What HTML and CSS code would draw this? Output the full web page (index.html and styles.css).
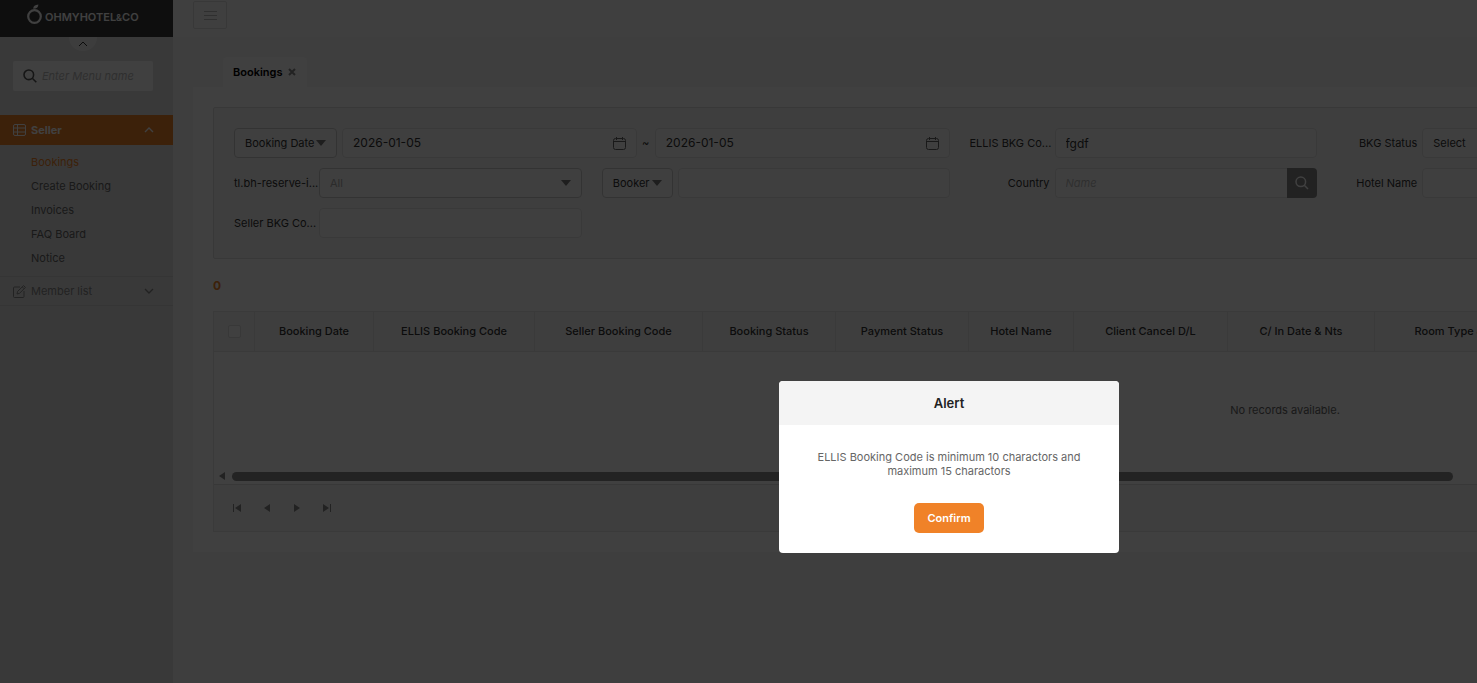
FILE: index.html
```html
<!DOCTYPE html>
<html lang="en">
<head>
<meta charset="utf-8">
<title>Bookings</title>
<link rel="stylesheet" href="styles.css">
</head>
<body>
<div class="app">
  <aside class="sidebar">
    <a class="logo" href="#">
      <svg width="17" height="24" viewBox="0 0 17 24" fill="none" stroke="currentColor"><circle cx="8.500" cy="12.500" r="6.300" stroke-width="2.200"/><path d="M7.200 4.800C7.200 2 9 .6 12.400.4 12.400 3 10.600 4.800 7.200 4.800Z" fill="currentColor" stroke="none"/></svg>
      <span>OHMYHOTEL<small>&amp;</small>CO</span>
    </a>
    <button class="fold" aria-label="Collapse header"><svg width="10" height="6" viewBox="0 0 10 6"><path d="M1 5l4-4 4 4"/></svg></button>
    <label class="menu-search">
      <svg width="14" height="14" viewBox="0 0 14 14"><circle cx="5.800" cy="5.800" r="4.800"/><path d="M9.300 9.300L13.300 13.300"/></svg>
      <input type="text" placeholder="Enter Menu name" aria-label="Menu name">
    </label>
    <nav class="menu">
      <button class="group active">
        <svg width="13" height="12" viewBox="0 0 13 12"><rect x=".5" y=".5" width="12" height="11" rx="1.500"/><path d="M4.500 .5v11M.5 4h12M.5 8h12"/></svg>
        <span>Seller</span>
        <svg class="chev" width="10" height="6" viewBox="0 0 10 6"><path d="M1 5l4-4 4 4"/></svg>
      </button>
      <ul>
        <li><a class="current" href="#">Bookings</a></li>
        <li><a href="#">Create Booking</a></li>
        <li><a href="#">Invoices</a></li>
        <li><a href="#">FAQ Board</a></li>
        <li><a href="#">Notice</a></li>
      </ul>
      <button class="group plain">
        <svg width="13" height="13" viewBox="0 0 13 13"><path d="M7 2H1.500a1 1 0 0 0-1 1v8.500a1 1 0 0 0 1 1H10a1 1 0 0 0 1-1V6M4 9l.6-2.600L10.600.6l1.800 1.800-5.900 6zM9.300 1.900l1.800 1.800"/></svg>
        <span>Member list</span>
        <svg class="chev" width="10" height="6" viewBox="0 0 10 6"><path d="M1 1l4 4 4-4"/></svg>
      </button>
    </nav>
  </aside>

  <main class="main">
    <header class="topbar">
      <button class="burger" aria-label="Menu"><svg width="13" height="9" viewBox="0 0 13 9"><path d="M0 .5h13M0 4.500h13M0 8.500h13"/></svg></button>
    </header>
    <div class="tabs">
      <div class="tab"><span>Bookings</span><button aria-label="Close tab"><svg width="8" height="8" viewBox="0 0 8 8"><path d="M1 1l6 6M7 1l-6 6"/></svg></button></div>
    </div>
    <section class="panel">
      <form class="filters">
        <div class="field wide">
          <div class="select kind"><select aria-label="Date type"><option>Booking Date</option></select><svg width="10" height="6" viewBox="0 0 10 6"><path d="M0 0h10L5 6z"/></svg></div>
          <div class="range">
            <label class="date"><input type="text" value="2026-01-05" aria-label="From"><svg width="13" height="13" viewBox="0 0 13 13"><path d="M.5 4.500h12M.5 3.500a2 2 0 0 1 2-2h8a2 2 0 0 1 2 2v7a2 2 0 0 1-2 2h-8a2 2 0 0 1-2-2zM3.500 0v3M9.500 0v3"/></svg></label>
            <span class="tilde">~</span>
            <label class="date"><input type="text" value="2026-01-05" aria-label="To"><svg width="13" height="13" viewBox="0 0 13 13"><path d="M.5 4.500h12M.5 3.500a2 2 0 0 1 2-2h8a2 2 0 0 1 2 2v7a2 2 0 0 1-2 2h-8a2 2 0 0 1-2-2zM3.500 0v3M9.500 0v3"/></svg></label>
          </div>
        </div>
        <div class="field"><label class="right" for="ellis">ELLIS BKG Co...</label><input class="box" id="ellis" type="text" value="fgdf"></div>
        <div class="field"><label class="right" for="status">BKG Status</label><input class="box small" id="status" type="text" value="Select"></div>

        <div class="field"><label for="item">tl.bh-reserve-i...</label><div class="select grow muted"><select id="item"><option>All</option></select><svg width="10" height="6" viewBox="0 0 10 6"><path d="M0 0h10L5 6z"/></svg></div></div>
        <div class="field"><div class="select person"><select aria-label="Person type"><option>Booker</option></select><svg width="10" height="6" viewBox="0 0 10 6"><path d="M0 0h10L5 6z"/></svg></div><input class="box" type="text" aria-label="Booker"></div>
        <div class="field"><label class="right" for="country">Country</label><div class="lookup"><input class="box small" id="country" type="text" placeholder="Name"><button type="button" aria-label="Find country"><svg width="14" height="14" viewBox="0 0 14 14"><circle cx="5.800" cy="5.800" r="4.800"/><path d="M9.300 9.300L13 13"/></svg></button></div></div>
        <div class="field"><label class="right" for="hotel">Hotel Name</label><input class="box" id="hotel" type="text"></div>

        <div class="field"><label for="seller">Seller BKG Co...</label><input class="box" id="seller" type="text"></div>
      </form>

      <div class="count">0</div>

      <div class="grid">
        <div class="scroller">
          <table>
            <colgroup><col class="w-check"><col class="w-date"><col class="w-ellis"><col class="w-seller"><col class="w-status"><col class="w-status"><col class="w-hotel"><col class="w-cancel"><col class="w-nights"><col class="w-room"><col></colgroup>
            <thead><tr><th><input type="checkbox" aria-label="Select all"></th><th>Booking Date</th><th>ELLIS Booking Code</th><th>Seller Booking Code</th><th>Booking Status</th><th>Payment Status</th><th>Hotel Name</th><th>Client Cancel D/L</th><th>C/ In Date &amp; Nts</th><th>Room Type &amp; Count</th><th></th></tr></thead>
            <tbody><tr><td colspan="11">No records available.</td></tr></tbody>
          </table>
        </div>
        <div class="scrollbar"><svg width="6" height="8" viewBox="0 0 6 8"><path d="M6 0v8L0 4z"/></svg><div class="track"><div class="thumb"></div></div></div>
        <div class="pager">
          <button aria-label="First page"><svg width="8" height="8" viewBox="0 0 8 8"><path d="M0 0h1v8H0zM8 0v8L2 4z"/></svg></button>
          <button aria-label="Previous page"><svg width="8" height="8" viewBox="0 0 8 8"><path d="M7 0v8L1 4z"/></svg></button>
          <button aria-label="Next page"><svg width="8" height="8" viewBox="0 0 8 8"><path d="M1 0v8l6-4z"/></svg></button>
          <button aria-label="Last page"><svg width="8" height="8" viewBox="0 0 8 8"><path d="M7 0h1v8H7zM0 0v8l6-4z"/></svg></button>
        </div>
      </div>
    </section>
  </main>

  <div class="overlay">
    <div class="dialog" role="alertdialog" aria-labelledby="alert-title">
      <h2 id="alert-title">Alert</h2>
      <p>ELLIS Booking Code is minimum 10 charactors and maximum 15 charactors</p>
      <button>Confirm</button>
    </div>
  </div>
</div>
</body>
</html>
```

FILE: styles.css
```css
* { box-sizing: border-box; }
html { overflow: hidden; }
body { margin: 0; overflow: hidden; font: 11px/14px Inter, "Liberation Sans", sans-serif; color: #333; }
button, input, select { font: inherit; color: inherit; }
button { padding: 0; border: 0; background: none; }
a { color: inherit; text-decoration: none; }
svg { flex: none; fill: none; stroke: currentColor; }

.app { position: relative; display: flex; min-width: 1898px; min-height: 934px; background: #f6f6f6; }

.sidebar { flex: none; display: flex; flex-direction: column; width: 173px; background: #e4e4e4; }
.logo { display: flex; align-items: center; gap: 2px; height: 37px; padding: 0 0 5px 26px; background: #383838; color: #fff; font-weight: 600; }
.logo span { padding-top: 2px; }
.logo small { font-size: 9px; }
.fold { align-self: center; display: flex; justify-content: center; align-items: center; width: 28px; height: 14px; margin-right: 8px; border-radius: 0 0 14px 14px; background: #f4f4f4; }
.menu-search { display: flex; align-items: center; gap: 5px; height: 30px; margin: 10px 20px 24px 13px; padding-left: 10px; border-radius: 2px; background: #fff; color: #555; }
.menu-search svg { stroke-width: 1.6; }
.menu-search input { flex: 1; min-width: 0; padding: 0; border: 0; outline: 0; background: none; }
input::placeholder { color: #bbb; font-style: italic; }
.group { display: flex; align-items: center; gap: 5px; width: 100%; height: 30px; padding: 0 19px 0 13px; text-align: left; }
.group .chev { margin-left: auto; stroke-width: 1.4; }
.active { background: #f08228; color: #fff; font-weight: 700; }
.plain { border: solid #d4d4d4; border-width: 1px 0; color: #888; }
.menu ul { margin: 0; padding: 5px 0 6px 31px; list-style: none; color: #666; }
.menu li { height: 24px; line-height: 24px; }
.current { color: #f08228; }

.main { flex: 1; min-width: 0; }
.topbar { height: 37px; padding: 1px 20px; background: #fcfcfc; }
.burger { display: grid; place-items: center; width: 34px; height: 28px; border: 1px solid #ddd; border-radius: 2px; color: #bbb; }
.tabs { display: flex; padding: 20px 50px 0; }
.tab { display: flex; align-items: center; gap: 6px; height: 30px; padding: 0 11px 0 10px; border-radius: 4px 4px 0 0; background: #fdfdfd; color: #000; font-weight: 600; }
.tab button { display: flex; color: #888; }
.tab svg { stroke-width: 2; }
.panel { margin: 0 20px; padding: 20px; background: #fdfdfd; }

.filters { display: grid; grid-template-columns: repeat(4, minmax(0, 1fr)); gap: 10px 20px; padding: 20px 172px 20px 20px; border: 1px solid #dedede; border-radius: 2px; background: #f8f8f8; }
.field { display: flex; align-items: center; gap: 5px; height: 30px; }
.wide { grid-column: span 2; }
.field > label { flex: none; width: 80px; white-space: nowrap; }
.right { text-align: right; }
.box, .date { flex: 1; min-width: 0; width: 100%; height: 30px; padding: 0 10px; border: 1px solid #e4e4e4; border-radius: 4px; outline: 0; background: #fbfbfb; font-size: 12px; }
.small { font-size: 11px; }
.range { flex: 1; display: flex; align-items: center; }
.date { display: flex; align-items: center; }
.date input { flex: 1; min-width: 0; padding: 0; border: 0; outline: 0; background: none; }
.date svg { color: #666; }
.tilde { width: 18px; text-align: center; }
.select { display: grid; align-items: center; height: 30px; border: 1px solid #ccc; border-radius: 4px; background: #fbfbfb; }
.select select, .select svg { grid-area: 1 / 1; }
.select select { appearance: none; width: 100%; height: 28px; padding: 0 10px; border: 0; outline: 0; background: none; }
.select svg { justify-self: end; margin-right: 10px; fill: #777; stroke: none; pointer-events: none; }
.kind { width: 103px; }
.person { width: 71px; }
.grow { flex: 1; }
.muted select { color: #aaa; }
.lookup { flex: 1; display: flex; }
.lookup .box { border-radius: 4px 0 0 4px; border-right: 0; }
.lookup button { display: grid; place-items: center; width: 30px; height: 30px; border-radius: 0 4px 4px 0; background: #888; color: #fff; }
.lookup svg { stroke-width: 1.500; }

.count { padding: 20px 0 18px; color: #f08228; font-size: 12px; font-weight: 700; }
.grid { border: 1px solid #e6e6e6; }
.scroller { overflow: hidden; }
table { width: 2142px; table-layout: fixed; border-collapse: separate; border-spacing: 0; }
.w-check { width: 41px; }
.w-date { width: 119px; }
.w-ellis { width: 161px; }
.w-seller { width: 168px; }
.w-status { width: 133px; }
.w-hotel { width: 105px; }
.w-cancel { width: 154px; }
.w-nights { width: 147px; }
.w-room { width: 184px; }
th { height: 40px; padding: 0 0 2px; border: solid #e8e8e8; border-width: 0 1px 1px 0; background: #f8f8f8; font-weight: 500; white-space: nowrap; }
th input { appearance: none; display: block; width: 13px; height: 13px; margin: 2px auto 0; border: 1px solid #ddd; border-radius: 2px; background: #fff; }
td { height: 117px; padding: 0 0 2px; text-align: center; color: #666; }
.scrollbar { display: flex; align-items: center; gap: 7px; height: 16px; padding: 0 19px 1px 5px; border-bottom: 1px solid #ddd; }
.scrollbar svg, .pager svg { fill: currentColor; stroke: none; color: #888; }
.track { flex: 1; }
.thumb { width: 76%; height: 9px; border-radius: 5px; background: #8c8c8c; }
.pager { display: flex; align-items: center; height: 46px; padding-left: 8px; background: #f8f8f8; }
.pager button { display: grid; place-items: center; width: 30px; height: 30px; }

.overlay { position: absolute; inset: 0; display: grid; place-items: center; background: rgba(0, 0, 0, .75); }
.dialog { width: 340px; padding-bottom: 20px; border-radius: 4px; overflow: hidden; background: #fff; text-align: center; }
.dialog h2 { margin: 0; padding: 15px; background: #f4f4f4; color: #222; font-size: 13px; line-height: 14px; font-weight: 600; }
.dialog p { margin: 25px 36px; color: #666; }
.dialog button { width: 70px; height: 30px; border-radius: 5px; background: #f08228; color: #fff; font-weight: 600; }
```
